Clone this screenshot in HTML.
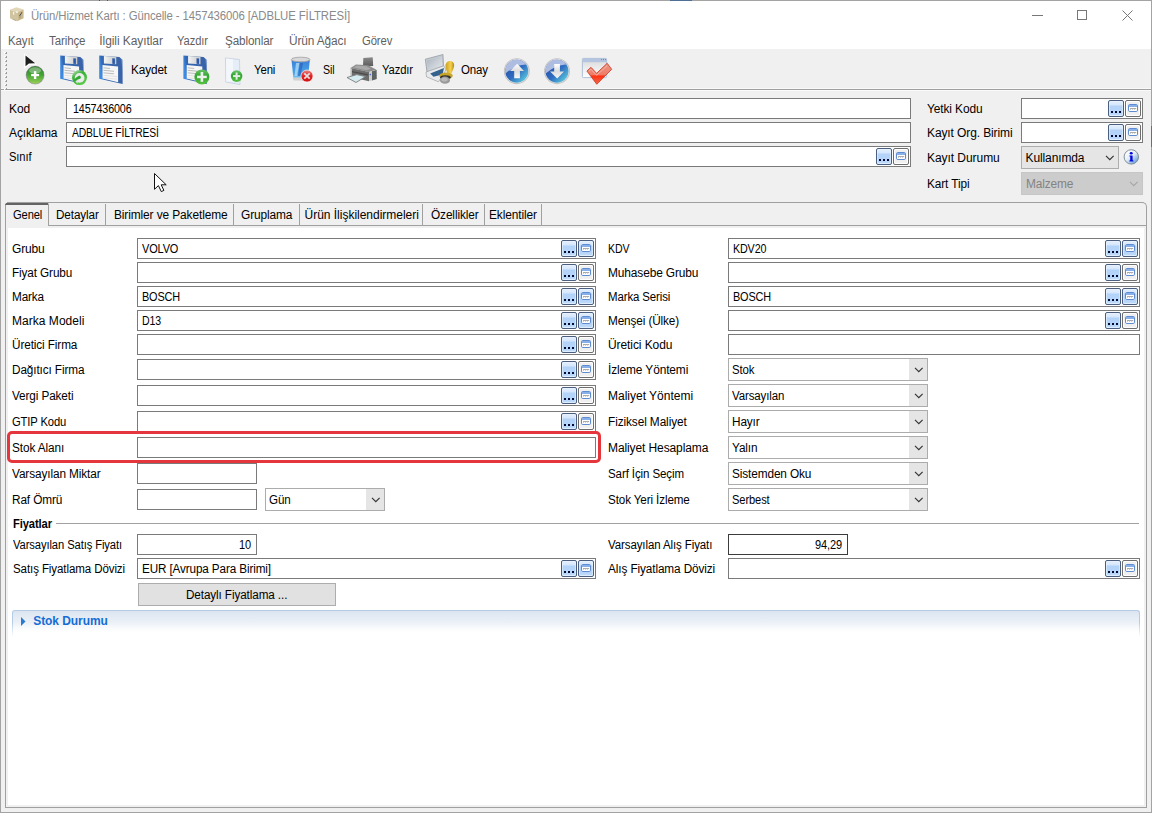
<!DOCTYPE html><html><head><meta charset="utf-8"><style>
*{margin:0;padding:0;box-sizing:border-box}
html,body{width:1152px;height:813px;overflow:hidden}
body{position:relative;background:#f0f0f0;font-family:"Liberation Sans",sans-serif;font-size:12px;color:#000}
.a{position:absolute}
.t{position:absolute;white-space:nowrap;line-height:20px;height:20px}
.f{position:absolute;background:#fff;border:1px solid #7a7a7a;height:21px}
.bd,.bc,.bw{position:absolute;width:16px;height:17px;border:1px solid #4b5e80;border-radius:2px;background:linear-gradient(#e3effd 0,#d6e7fc 4px,#b3d2f8 5px,#b7d6fa 13px,#d3e6fc 15px);box-shadow:inset 0 0 0 1px rgba(235,245,255,.55)}
.bw{border-color:#6e6e6e;background:#f0f0f0;box-shadow:inset 0 0 0 1px #fff}
.bd i{position:absolute;top:10px;width:2px;height:2px;background:#000a30}
.bc svg,.bw svg{position:absolute;left:2px;top:3px}
.cb{position:absolute;height:23px;border:1px solid #acacac;background:#fff}
.ca{position:absolute;right:0;top:0;width:18px;height:21px;background:#e5e5e5}
.chev{position:absolute;right:3px;top:8px}
</style></head><body>
<div class="a" style="left:0;top:0;width:1152px;height:813px;border:1px solid #a3a3a3"></div>
<div class="a" style="left:1px;top:1px;width:1150px;height:48px;background:#fff"></div>
<div class="a" style="left:1px;top:88px;width:1150px;height:1px;background:#f9f9f9"></div>
<div class="a" style="left:1px;top:89px;width:1150px;height:1px;background:#a0a0a0"></div>
<div class="a" style="left:1px;top:90px;width:1150px;height:1px;background:#fafafa"></div>
<div class="a" style="left:1151px;top:126px;width:1px;height:21px;background:#52739a"></div>
<div class="a" style="left:670px;top:0;width:22px;height:1px;background:#4f7096"></div><div class="a" style="left:99px;top:0;width:1px;height:1px;background:#555"></div><div class="a" style="left:107px;top:0;width:1px;height:1px;background:#555"></div>
<svg class="a" style="left:9px;top:6px" width="16" height="16" viewBox="9 6 16 16">
<path d="M10 9.8 L16.3 7.2 L23.6 9.4 L17.2 12.2 Z" fill="#e2d6b8"/>
<path d="M10 9.8 L17.2 12.2 L17.2 21.2 L10 18.2 Z" fill="#d0c3a0"/>
<path d="M17.2 12.2 L23.6 9.4 L23.6 18.3 L17.2 21.2 Z" fill="#c9b98a"/>
<path d="M13 11.6 L14.2 12 L14.2 15 L13 14.6 Z" fill="#f6f3ea"/>
<path d="M15.9 11.2 L17.8 11.8 L17.6 13 L15.9 12.6 Z" fill="#ffffff"/>
<path d="M21.8 12 L22.3 12.4 L20.2 15.8 L19 16 Z" fill="#363c50"/>
<path d="M19.6 15.8 L20.6 15.2 L20.3 18 L19.5 18.4 Z" fill="#8c8a80"/>
<path d="M12.5 18.8 L16 20.2 L15.8 21 L12.3 19.6 Z" fill="#8a7a55" opacity="0.5"/>
</svg>
<div class="t" style="top:6px;letter-spacing:-0.116px;transform:scaleX(0.9483);transform-origin:0 0;left:31px;color:#8a8a8a;">Ürün/Hizmet Kartı : Güncelle - 1457436006 [ADBLUE FİLTRESİ]</div>
<div class="a" style="left:1032px;top:15px;width:11px;height:1px;background:#777"></div>
<div class="a" style="left:1077px;top:10px;width:10px;height:10px;border:1px solid #777"></div>
<svg class="a" style="left:1122px;top:10px" width="11" height="11"><path d="M0.5 0.5L10.5 10.5M10.5 0.5L0.5 10.5" stroke="#777" stroke-width="1"/></svg>
<div class="t" style="top:31px;letter-spacing:-0.109px;transform:scaleX(0.9548);transform-origin:0 0;left:8.3px;color:#5f5f5f;">Kayıt</div>
<div class="t" style="top:31px;letter-spacing:-0.111px;transform:scaleX(0.9601);transform-origin:0 0;left:48.6px;color:#5f5f5f;">Tarihçe</div>
<div class="t" style="top:31px;letter-spacing:-0.079px;left:99.3px;color:#5f5f5f;">İlgili Kayıtlar</div>
<div class="t" style="top:31px;letter-spacing:-0.113px;transform:scaleX(0.9329);transform-origin:0 0;left:177.1px;color:#5f5f5f;">Yazdır</div>
<div class="t" style="top:31px;letter-spacing:-0.113px;transform:scaleX(0.9741);transform-origin:0 0;left:225.2px;color:#5f5f5f;">Şablonlar</div>
<div class="t" style="top:31px;letter-spacing:-0.119px;transform:scaleX(0.9882);transform-origin:0 0;left:288.5px;color:#5f5f5f;">Ürün Ağacı</div>
<div class="t" style="top:31px;letter-spacing:-0.131px;transform:scaleX(0.9428);transform-origin:0 0;left:361.8px;color:#5f5f5f;">Görev</div>
<svg class="a" style="left:0;top:0" width="640" height="90" viewBox="0 0 640 90">
<defs>
<linearGradient id="gg" x1="0" y1="0" x2="0" y2="1"><stop offset="0" stop-color="#2f7f2a"/><stop offset="0.5" stop-color="#45a535"/><stop offset="1" stop-color="#9ad25a"/></linearGradient>
<linearGradient id="gg2" x1="0" y1="0" x2="0" y2="1"><stop offset="0" stop-color="#6cc46a"/><stop offset="0.45" stop-color="#2fa52f"/><stop offset="1" stop-color="#59c240"/></linearGradient>
<linearGradient id="gg3" x1="0.2" y1="0" x2="0.8" y2="1"><stop offset="0" stop-color="#a8dca4"/><stop offset="0.35" stop-color="#38b038"/><stop offset="1" stop-color="#5ed24a"/></linearGradient>
<linearGradient id="ar" x1="0" y1="0" x2="0" y2="1"><stop offset="0" stop-color="#ffffff"/><stop offset="0.5" stop-color="#dcdcdc"/><stop offset="1" stop-color="#f8f8f8"/></linearGradient>
<linearGradient id="wn" x1="0" y1="0" x2="0" y2="1"><stop offset="0" stop-color="#d8d8d8"/><stop offset="1" stop-color="#ffffff"/></linearGradient>
<linearGradient id="lid" x1="0" y1="0" x2="1" y2="1"><stop offset="0" stop-color="#a9b1ba"/><stop offset="0.5" stop-color="#c9cfd6"/><stop offset="1" stop-color="#e6e9ec"/></linearGradient>
<linearGradient id="fb" x1="0" y1="0.2" x2="1" y2="0"><stop offset="0" stop-color="#3c8ae2"/><stop offset="0.12" stop-color="#3468b4"/><stop offset="0.88" stop-color="#3a62a8"/><stop offset="1" stop-color="#8fb0dc"/></linearGradient>
<linearGradient id="sh" x1="0" y1="0" x2="1" y2="0"><stop offset="0" stop-color="#f4f4f4"/><stop offset="1" stop-color="#c8c8c8"/></linearGradient>
<linearGradient id="bc" x1="0.1" y1="0.2" x2="0.85" y2="0.95"><stop offset="0" stop-color="#2850a8"/><stop offset="0.5" stop-color="#2f6cc0"/><stop offset="1" stop-color="#5ccade"/></linearGradient>
<linearGradient id="tb" x1="0" y1="0" x2="0" y2="1"><stop offset="0" stop-color="#3a7fd8"/><stop offset="0.7" stop-color="#4aa6e8"/><stop offset="1" stop-color="#8fd6f5"/></linearGradient>
<linearGradient id="rc" x1="0" y1="0" x2="0" y2="1"><stop offset="0" stop-color="#e88a8a"/><stop offset="0.5" stop-color="#e52020"/><stop offset="1" stop-color="#d01010"/></linearGradient>
<linearGradient id="ck" x1="0" y1="0" x2="0" y2="1"><stop offset="0" stop-color="#e9988a"/><stop offset="0.55" stop-color="#f07a66"/><stop offset="0.6" stop-color="#ff3010"/><stop offset="1" stop-color="#f06a50"/></linearGradient>
<linearGradient id="gold" x1="0" y1="0" x2="1" y2="0"><stop offset="0" stop-color="#c9a020"/><stop offset="0.6" stop-color="#f5d050"/><stop offset="1" stop-color="#b08a10"/></linearGradient>
<linearGradient id="pr" x1="0" y1="0" x2="0" y2="1"><stop offset="0" stop-color="#8a8a8a"/><stop offset="1" stop-color="#5a5a5a"/></linearGradient>
</defs>
<rect x="4" y="52" width="2" height="2" fill="#fbfbfb"/><rect x="6" y="52" width="1" height="2" fill="#9a9a9a"/><rect x="5" y="53" width="1" height="1" fill="#b0b0b0"/>
<rect x="4" y="56" width="2" height="2" fill="#fbfbfb"/><rect x="6" y="56" width="1" height="2" fill="#9a9a9a"/><rect x="5" y="57" width="1" height="1" fill="#b0b0b0"/>
<rect x="4" y="60" width="2" height="2" fill="#fbfbfb"/><rect x="6" y="60" width="1" height="2" fill="#9a9a9a"/><rect x="5" y="61" width="1" height="1" fill="#b0b0b0"/>
<rect x="4" y="64" width="2" height="2" fill="#fbfbfb"/><rect x="6" y="64" width="1" height="2" fill="#9a9a9a"/><rect x="5" y="65" width="1" height="1" fill="#b0b0b0"/>
<rect x="4" y="68" width="2" height="2" fill="#fbfbfb"/><rect x="6" y="68" width="1" height="2" fill="#9a9a9a"/><rect x="5" y="69" width="1" height="1" fill="#b0b0b0"/>
<rect x="4" y="72" width="2" height="2" fill="#fbfbfb"/><rect x="6" y="72" width="1" height="2" fill="#9a9a9a"/><rect x="5" y="73" width="1" height="1" fill="#b0b0b0"/>
<rect x="4" y="76" width="2" height="2" fill="#fbfbfb"/><rect x="6" y="76" width="1" height="2" fill="#9a9a9a"/><rect x="5" y="77" width="1" height="1" fill="#b0b0b0"/>
<rect x="4" y="80" width="2" height="2" fill="#fbfbfb"/><rect x="6" y="80" width="1" height="2" fill="#9a9a9a"/><rect x="5" y="81" width="1" height="1" fill="#b0b0b0"/>
<rect x="4" y="84" width="2" height="2" fill="#fbfbfb"/><rect x="6" y="84" width="1" height="2" fill="#9a9a9a"/><rect x="5" y="85" width="1" height="1" fill="#b0b0b0"/>
<rect x="4" y="88" width="2" height="2" fill="#fbfbfb"/><rect x="6" y="88" width="1" height="2" fill="#9a9a9a"/><rect x="5" y="89" width="1" height="1" fill="#b0b0b0"/>
<path d="M24.2 53.3 L24.2 68.6 L28.6 65.2 L37 64.6 Z" fill="#fff"/>
<path d="M25.5 55.5 L25.5 66.2 L28.9 63.4 L35.2 63.3 Z" fill="#1e1e1e"/>
<circle cx="35.1" cy="75.1" r="9" fill="url(#gg)" stroke="#7a5a8a" stroke-width="0.4"/>
<ellipse cx="35.1" cy="70.5" rx="6" ry="3.2" fill="#fff" opacity="0.35"/>
<rect x="31.1" y="74" width="8" height="2.2" fill="#fff"/><rect x="33.9" y="71.2" width="2.4" height="7.8" fill="#fff"/>
<path d="M60.2 55.6 L80.3 57.0 L83.6 59.8 L83.6 84.1 L60.2 78.7 Z" fill="url(#fb)"/>
<path d="M64.9 55.9 L77.3 56.8 L77.3 64.2 L64.9 63.6 Z" fill="url(#sh)"/>
<path d="M73.3 58.2 L75.9 58.4 L75.9 63.9 L73.3 63.8 Z" fill="#2c5aa8"/>
<path d="M63.5 65.0 L79.1 66.6 L79.1 82.2 L63.5 78.5 Z" fill="#f6f6f6"/>
<path d="M64.5 67.8 L71.0 68.5" stroke="#a0a0a0" stroke-width="0.7"/>
<path d="M64.5 70.3 L75.0 71.3" stroke="#a0a0a0" stroke-width="0.7"/>
<path d="M64.5 72.8 L75.0 73.8" stroke="#a0a0a0" stroke-width="0.7"/>
<path d="M64.5 75.3 L78.5 76.7" stroke="#d8d8d8" stroke-width="0.7"/>
<path d="M64.5 77.8 L78.5 79.2" stroke="#d8d8d8" stroke-width="0.7"/>
<circle cx="79.5" cy="77.6" r="7.5" fill="url(#gg3)"/>
<circle cx="79.6" cy="77.9" r="4.9" fill="#ecebee"/>
<path d="M73.3 80.2 L76.5 77.2 L79.2 75.6 L81 76.8 L80.5 78.4 L77.4 79.8 L75.8 82.5 Z" fill="#30a830"/>
<path d="M75.2 81 L79 79.7 L77.2 83.6 Z" fill="#e4e2e6"/>
<path d="M99.2 55.6 L119.3 57.0 L122.6 59.8 L122.6 84.1 L99.2 78.7 Z" fill="url(#fb)"/>
<path d="M103.9 55.9 L116.3 56.8 L116.3 64.2 L103.9 63.6 Z" fill="url(#sh)"/>
<path d="M112.3 58.2 L114.9 58.4 L114.9 63.9 L112.3 63.8 Z" fill="#2c5aa8"/>
<path d="M102.5 65.0 L118.1 66.6 L118.1 82.2 L102.5 78.5 Z" fill="#f6f6f6"/>
<path d="M103.5 67.8 L110.0 68.5" stroke="#a0a0a0" stroke-width="0.7"/>
<path d="M103.5 70.3 L114.0 71.3" stroke="#a0a0a0" stroke-width="0.7"/>
<path d="M103.5 72.8 L114.0 73.8" stroke="#a0a0a0" stroke-width="0.7"/>
<path d="M103.5 75.3 L117.5 76.7" stroke="#d8d8d8" stroke-width="0.7"/>
<path d="M103.5 77.8 L117.5 79.2" stroke="#d8d8d8" stroke-width="0.7"/>
<path d="M183.4 55.6 L203.5 57.0 L206.8 59.8 L206.8 84.1 L183.4 78.7 Z" fill="url(#fb)"/>
<path d="M188.1 55.9 L200.5 56.8 L200.5 64.2 L188.1 63.6 Z" fill="url(#sh)"/>
<path d="M196.5 58.2 L199.1 58.4 L199.1 63.9 L196.5 63.8 Z" fill="#2c5aa8"/>
<path d="M186.7 65.0 L202.3 66.6 L202.3 82.2 L186.7 78.5 Z" fill="#f6f6f6"/>
<path d="M187.7 67.8 L194.2 68.5" stroke="#a0a0a0" stroke-width="0.7"/>
<path d="M187.7 70.3 L198.2 71.3" stroke="#a0a0a0" stroke-width="0.7"/>
<path d="M187.7 72.8 L198.2 73.8" stroke="#a0a0a0" stroke-width="0.7"/>
<path d="M187.7 75.3 L201.7 76.7" stroke="#d8d8d8" stroke-width="0.7"/>
<path d="M187.7 77.8 L201.7 79.2" stroke="#d8d8d8" stroke-width="0.7"/>
<circle cx="201.9" cy="76.9" r="7.5" fill="url(#gg2)"/>
<rect x="197" y="75.7" width="9.8" height="2.5" fill="#eef2ee"/><rect x="200.6" y="72" width="2.6" height="9.8" fill="#eef2ee"/>
<path d="M225.4 57.9 L239.5 59.5 L240 84.6 L225.8 82 Z" fill="#e4edf8" stroke="#b8c6d6" stroke-width="0.6"/>
<path d="M226 58.5 L233 59.3 L233 81.8 L226.3 81.5 Z" fill="#f3f7fc"/>
<circle cx="236.6" cy="76.1" r="5.8" fill="url(#gg2)"/>
<rect x="233" y="75.1" width="7.2" height="2" fill="#e6ece6"/><rect x="235.6" y="72.5" width="2" height="7.2" fill="#e6ece6"/>
<path d="M291.5 60 L309.8 60 L307.8 79.8 L293.5 79.8 Z" fill="url(#tb)"/>
<path d="M296 63 L299.5 63 L297 76 L294.5 76 Z" fill="#bfe4fa" opacity="0.7"/><path d="M300 63 L303 63 L300.5 76 L298 76 Z" fill="#2858b8" opacity="0.6"/>
<ellipse cx="300.6" cy="59.5" rx="9.3" ry="2.3" fill="#d8d8d8" stroke="#a0a0a0" stroke-width="0.8"/>
<path d="M293.3 77.5 L307.9 77.5 L307.6 80.5 L293.6 80.5 Z" fill="#d0d0d0"/>
<circle cx="307" cy="76" r="6" fill="url(#rc)" stroke="#fff" stroke-width="0.6"/>
<path d="M304.3 73.3 L309.7 78.7 M309.7 73.3 L304.3 78.7" stroke="#e0e0e0" stroke-width="1.8"/>
<path d="M363.3 58 L372.7 57.2 L373.2 66 L363 66.5 Z" fill="url(#pr)"/>
<path d="M350.5 68 L356 64.6 L368 65.3 L376.5 69.8 L369 72 Z" fill="#8c8c8c"/>
<path d="M353 67.2 L357 65.6 L366.5 66.2 L371 69 L366 70.2 Z" fill="#a9a9a9"/>
<path d="M350.5 68 L369 72 L369 81.3 L350.5 77 Z" fill="#6c6c6c"/>
<path d="M352 71 L368 74.3 L368 75.5 L352 72.3 Z" fill="#4a4a4a"/>
<path d="M369 72 L376.5 69.8 L376.7 79 L369 81.3 Z" fill="#c9cdcd"/>
<path d="M372 71.2 L376.6 69.9 L376.7 79 L372 80.4 Z" fill="#5e6262"/>
<path d="M350 68.2 L351.8 68.6 L351.8 77.3 L350 77 Z" fill="#d4d4d4"/>
<circle cx="370.3" cy="74.6" r="0.8" fill="#4a64d0"/>
<path d="M347 77.5 L356.8 74.6 L365.5 76.6 L356 82.5 Z" fill="#d2eaf0" stroke="#7c7c7c" stroke-width="0.9"/>
<path d="M425.3 59.2 L443 54.5 L443.5 66.5 L427 72.5 Z" fill="#c3c9d0" stroke="#8f959c" stroke-width="0.7"/>
<path d="M427 60.5 L442 56.5 L442.2 65.8 L428 71 Z" fill="url(#lid)"/>
<path d="M426 72 L443.8 65.8 L446 70 L438.5 81.8 L426.5 76.8 Z" fill="#e8eaec" stroke="#9ca0a4" stroke-width="0.7"/>
<path d="M430.2 73.6 L444 68 L442.5 74.5 L433.5 76.8 Z" fill="#34628e"/>
<path d="M447 62 C449 60,454 60.5,454.2 65 C454.2 68,452.2 71,451.2 73.8 L447.6 73.8 C446.6 71,445 67,445.5 64.5 Z" fill="url(#gold)"/>
<ellipse cx="446" cy="75.8" rx="6.8" ry="3.3" fill="#c9a52a"/>
<ellipse cx="445.4" cy="77.3" rx="5.3" ry="2" fill="#333"/>
<ellipse cx="445" cy="80.2" rx="5" ry="3.6" fill="#9a9a9a"/>
<ellipse cx="444.5" cy="79.5" rx="3.2" ry="2" fill="#b8b8b8"/>
<circle cx="516.8" cy="71.2" r="12.4" fill="#f4f4f4" stroke="#c4c4c4" stroke-width="1.1"/>
<circle cx="516.8" cy="71.2" r="11.5" fill="url(#bc)"/>
<path d="M505.49999999999994 73.5 A11.5 11.5 0 0 1 526.0999999999999 64.4 C519.8 64.7,512.8 67.2,505.49999999999994 73.5 Z" fill="#bcc8e8" opacity="0.9"/>
<path d="M517.1999999999999 63.8 L524.0 71 L519.9 71 L519.9 78.3 L514.1999999999999 78.3 L514.1999999999999 71 L509.99999999999994 71 Z" fill="url(#ar)"/>
<circle cx="557" cy="71.2" r="12.4" fill="#f4f4f4" stroke="#c4c4c4" stroke-width="1.1"/>
<circle cx="557" cy="71.2" r="11.5" fill="url(#bc)"/>
<path d="M545.7 73.5 A11.5 11.5 0 0 1 566.3 64.4 C560 64.7,553 67.2,545.7 73.5 Z" fill="#bcc8e8" opacity="0.9"/>
<path d="M557.2 78.6 L564 71.4 L559.9 71.4 L559.9 64.1 L554.2 64.1 L554.2 71.4 L550 71.4 Z" fill="url(#ar)"/>
<rect x="582.4" y="58.4" width="24.2" height="19.2" rx="1" fill="url(#wn)" stroke="#a9bad6" stroke-width="0.9"/>
<rect x="582.8" y="58.8" width="23.4" height="3.4" fill="#b3c5e1"/>
<path d="M601 59.6 h1 M603 59.6 h1 M605 59.6 h1" stroke="#6b84b8" stroke-width="1"/>
<path d="M586.9 71 L591 67.3 L596.6 73.3 L607.2 63.3 L611.7 69.3 L596.8 84.3 Z" fill="url(#ck)" stroke="#c8361f" stroke-width="0.8" stroke-linejoin="round"/>
<path d="M588.8 71.2 L591 69.3 L596.6 75.3 L607 65.8" fill="none" stroke="#f6c4b8" stroke-width="0.9" opacity="0.8"/>
</svg>
<div class="t" style="top:60px;letter-spacing:-0.125px;transform:scaleX(0.9833);transform-origin:0 0;left:131.2px;">Kaydet</div>
<div class="t" style="top:60px;letter-spacing:-0.115px;transform:scaleX(0.9482);transform-origin:0 0;left:254.4px;">Yeni</div>
<div class="t" style="top:60px;letter-spacing:-0.089px;transform:scaleX(0.8871);transform-origin:0 0;left:323.1px;">Sil</div>
<div class="t" style="top:60px;letter-spacing:-0.113px;transform:scaleX(0.9360);transform-origin:0 0;left:382px;">Yazdır</div>
<div class="t" style="top:60px;letter-spacing:-0.143px;transform:scaleX(0.9568);transform-origin:0 0;left:460.8px;">Onay</div>
<div class="t" style="top:99px;letter-spacing:-0.120px;left:9px;">Kod</div>
<div class="t" style="top:123px;letter-spacing:-0.120px;left:9px;">Açıklama</div>
<div class="t" style="top:147px;letter-spacing:-0.099px;transform:scaleX(0.9300);transform-origin:0 0;left:9px;">Sınıf</div>
<div class="f" style="left:66px;top:98px;width:845px;"></div>
<div class="f" style="left:66px;top:122px;width:845px;"></div>
<div class="t" style="top:99px;letter-spacing:-0.134px;transform:scaleX(0.8958);transform-origin:0 0;left:72.7px;">1457436006</div>
<div class="t" style="top:123px;letter-spacing:-0.138px;transform:scaleX(0.8587);transform-origin:0 0;left:72.2px;">ADBLUE FİLTRESİ</div>
<div class="f" style="left:66px;top:146px;width:845px;"></div>
<div class="bd" style="left:876px;top:148px"><i style="left:2px"></i><i style="left:6px"></i><i style="left:10px"></i></div>
<div class="bw" style="left:893px;top:148px"><svg width="10" height="8" viewBox="0 0 10 8"><rect x="0.5" y="0.5" width="9" height="7" rx="1.3" fill="#fff" stroke="#5f8bd0"/><rect x="1" y="1" width="8" height="2" fill="#88afe8"/><path d="M2 4.5 H8.2" stroke="#a9a9a9" stroke-width="1"/><path d="M2.5 4.5 V5.8 M4.6 4.5 V5.8 M6.7 4.5 V5.8" stroke="#b4b4b4" stroke-width="0.9"/></svg></div>
<div class="t" style="top:99px;letter-spacing:-0.114px;transform:scaleX(0.9946);transform-origin:0 0;left:927px;">Yetki Kodu</div>
<div class="t" style="top:123px;letter-spacing:-0.109px;left:927px;">Kayıt Org. Birimi</div>
<div class="t" style="top:148px;letter-spacing:-0.055px;left:927px;">Kayıt Durumu</div>
<div class="t" style="top:174px;letter-spacing:-0.098px;transform:scaleX(0.9853);transform-origin:0 0;left:927px;">Kart Tipi</div>
<div class="f" style="left:1021px;top:98px;width:122px;"></div>
<div class="bd" style="left:1108px;top:100px"><i style="left:2px"></i><i style="left:6px"></i><i style="left:10px"></i></div>
<div class="bw" style="left:1125px;top:100px"><svg width="10" height="8" viewBox="0 0 10 8"><rect x="0.5" y="0.5" width="9" height="7" rx="1.3" fill="#fff" stroke="#5f8bd0"/><rect x="1" y="1" width="8" height="2" fill="#88afe8"/><path d="M2 4.5 H8.2" stroke="#a9a9a9" stroke-width="1"/><path d="M2.5 4.5 V5.8 M4.6 4.5 V5.8 M6.7 4.5 V5.8" stroke="#b4b4b4" stroke-width="0.9"/></svg></div>
<div class="f" style="left:1021px;top:122px;width:122px;"></div>
<div class="bd" style="left:1108px;top:124px"><i style="left:2px"></i><i style="left:6px"></i><i style="left:10px"></i></div>
<div class="bw" style="left:1125px;top:124px"><svg width="10" height="8" viewBox="0 0 10 8"><rect x="0.5" y="0.5" width="9" height="7" rx="1.3" fill="#fff" stroke="#5f8bd0"/><rect x="1" y="1" width="8" height="2" fill="#88afe8"/><path d="M2 4.5 H8.2" stroke="#a9a9a9" stroke-width="1"/><path d="M2.5 4.5 V5.8 M4.6 4.5 V5.8 M6.7 4.5 V5.8" stroke="#b4b4b4" stroke-width="0.9"/></svg></div>
<div class="cb" style="left:1021px;top:146px;width:98px;height:23px;background:#e5e5e5;border-color:#adadad"><svg class="chev" width="10" height="6" viewBox="0 0 10 6"><path d="M1 0.8 L4.8 4.6 L8.6 0.8" fill="none" stroke="#333" stroke-width="1.15"/></svg></div>
<div class="t" style="top:148px;letter-spacing:-0.125px;left:1025.6px;">Kullanımda</div>
<svg class="a" style="left:1123px;top:149px" width="17" height="17" viewBox="0 0 17 17">
<defs><linearGradient id="ig" x1="0.15" y1="0.1" x2="0.85" y2="0.95"><stop offset="0" stop-color="#ffffff"/><stop offset="0.45" stop-color="#e4eef8"/><stop offset="1" stop-color="#5f9ad6"/></linearGradient></defs>
<circle cx="8.3" cy="7.9" r="7.2" fill="url(#ig)" stroke="#76838f" stroke-width="0.9"/>
<ellipse cx="8.2" cy="4.3" rx="1.5" ry="1.2" fill="#0008e0"/>
<path d="M6.4 6.6 L9.6 6.6 L9.6 11.2 L10.4 11.6 L10.4 12.5 L6.4 12.5 L6.4 11.6 L7.2 11.2 L7.2 7.5 L6.4 7.5 Z" fill="#0008e0"/>
</svg>
<div class="cb" style="left:1021px;top:172px;width:122px;height:23px;background:#cccccc;border-color:#c6c6c6"><svg class="chev" width="10" height="6" viewBox="0 0 10 6"><path d="M1 0.8 L4.8 4.6 L8.6 0.8" fill="none" stroke="#a6a6a6" stroke-width="1.15"/></svg></div>
<div class="t" style="top:174px;letter-spacing:-0.139px;transform:scaleX(0.9913);transform-origin:0 0;left:1025.6px;color:#838383;">Malzeme</div>
<svg class="a" style="left:150px;top:170px" width="20" height="25" viewBox="150 170 20 25"><path d="M154.5 173.5 L154.5 189.3 L158.4 185.6 L161.3 191.6 L163.9 190.4 L161.2 184.8 L166.2 184.8 Z" fill="#fff" stroke="#111" stroke-width="1" stroke-linejoin="round"/></svg>
<div class="a" style="left:7px;top:202px;width:1136px;height:1px;background:#a0a0a0"></div>
<div class="a" style="left:1138px;top:202px;width:9px;height:9px;border-top:1px solid #a0a0a0;border-right:1px solid #a0a0a0;border-radius:0 5px 0 0"></div>
<div class="a" style="left:1146px;top:211px;width:1px;height:597px;background:#a0a0a0"></div>
<div class="a" style="left:48px;top:225px;width:1098px;height:1px;background:#a0a0a0"></div>
<div class="a" style="left:5px;top:204px;width:1px;height:604px;background:#a0a0a0"></div>
<div class="a" style="left:5px;top:807px;width:1142px;height:1px;background:#a0a0a0"></div>
<div class="a" style="left:5px;top:203px;width:44px;height:2px;background:#646464;clip-path:polygon(1px 0,43px 0,44px 2px,0 2px)"></div>
<div class="a" style="left:48px;top:204px;width:1px;height:22px;background:#a0a0a0"></div>
<div class="a" style="left:8px;top:228px;width:1136px;height:577px;background:#fff"></div>
<div class="a" style="left:105px;top:204px;width:1px;height:21px;background:#a0a0a0"></div>
<div class="t" style="top:205px;letter-spacing:-0.111px;transform:scaleX(0.9924);transform-origin:0 0;left:113.6px;">Birimler ve Paketleme</div>
<div class="a" style="left:233px;top:204px;width:1px;height:21px;background:#a0a0a0"></div>
<div class="t" style="top:205px;letter-spacing:-0.132px;transform:scaleX(0.9935);transform-origin:0 0;left:241.3px;">Gruplama</div>
<div class="a" style="left:299px;top:204px;width:1px;height:21px;background:#a0a0a0"></div>
<div class="t" style="top:205px;letter-spacing:-0.013px;left:304.5px;">Ürün İlişkilendirmeleri</div>
<div class="a" style="left:422px;top:204px;width:1px;height:21px;background:#a0a0a0"></div>
<div class="t" style="top:205px;letter-spacing:-0.099px;transform:scaleX(0.9843);transform-origin:0 0;left:430.6px;">Özellikler</div>
<div class="a" style="left:484px;top:204px;width:1px;height:21px;background:#a0a0a0"></div>
<div class="t" style="top:205px;letter-spacing:-0.099px;transform:scaleX(0.9923);transform-origin:0 0;left:489.2px;">Eklentiler</div>
<div class="a" style="left:541px;top:204px;width:1px;height:21px;background:#a0a0a0"></div>
<div class="t" style="top:205px;letter-spacing:-0.128px;transform:scaleX(0.9302);transform-origin:0 0;left:12.5px;">Genel</div>
<div class="t" style="top:205px;letter-spacing:-0.112px;transform:scaleX(0.9750);transform-origin:0 0;left:56.25px;">Detaylar</div>
<div class="t" style="top:239px;letter-spacing:-0.152px;left:12px;">Grubu</div>
<div class="f" style="left:137px;top:238px;width:459px;"></div>
<div class="t" style="top:239px;letter-spacing:-0.162px;transform:scaleX(0.9128);transform-origin:0 0;left:142px;">VOLVO</div>
<div class="bd" style="left:561px;top:240px"><i style="left:2px"></i><i style="left:6px"></i><i style="left:10px"></i></div>
<div class="bc" style="left:578px;top:240px"><svg width="10" height="8" viewBox="0 0 10 8"><rect x="0.5" y="0.5" width="9" height="7" rx="1.3" fill="#fff" stroke="#5f8bd0"/><rect x="1" y="1" width="8" height="2" fill="#88afe8"/><path d="M2 4.5 H8.2" stroke="#a9a9a9" stroke-width="1"/><path d="M2.5 4.5 V5.8 M4.6 4.5 V5.8 M6.7 4.5 V5.8" stroke="#b4b4b4" stroke-width="0.9"/></svg></div>
<div class="t" style="top:263px;letter-spacing:-0.114px;transform:scaleX(0.9796);transform-origin:0 0;left:12px;">Fiyat Grubu</div>
<div class="f" style="left:137px;top:262px;width:459px;"></div>
<div class="bd" style="left:561px;top:264px"><i style="left:2px"></i><i style="left:6px"></i><i style="left:10px"></i></div>
<div class="bw" style="left:578px;top:264px"><svg width="10" height="8" viewBox="0 0 10 8"><rect x="0.5" y="0.5" width="9" height="7" rx="1.3" fill="#fff" stroke="#5f8bd0"/><rect x="1" y="1" width="8" height="2" fill="#88afe8"/><path d="M2 4.5 H8.2" stroke="#a9a9a9" stroke-width="1"/><path d="M2.5 4.5 V5.8 M4.6 4.5 V5.8 M6.7 4.5 V5.8" stroke="#b4b4b4" stroke-width="0.9"/></svg></div>
<div class="t" style="top:287px;letter-spacing:-0.133px;transform:scaleX(0.9796);transform-origin:0 0;left:12px;">Marka</div>
<div class="f" style="left:137px;top:286px;width:459px;"></div>
<div class="t" style="top:287px;letter-spacing:-0.171px;transform:scaleX(0.9084);transform-origin:0 0;left:142px;">BOSCH</div>
<div class="bd" style="left:561px;top:288px"><i style="left:2px"></i><i style="left:6px"></i><i style="left:10px"></i></div>
<div class="bc" style="left:578px;top:288px"><svg width="10" height="8" viewBox="0 0 10 8"><rect x="0.5" y="0.5" width="9" height="7" rx="1.3" fill="#fff" stroke="#5f8bd0"/><rect x="1" y="1" width="8" height="2" fill="#88afe8"/><path d="M2 4.5 H8.2" stroke="#a9a9a9" stroke-width="1"/><path d="M2.5 4.5 V5.8 M4.6 4.5 V5.8 M6.7 4.5 V5.8" stroke="#b4b4b4" stroke-width="0.9"/></svg></div>
<div class="t" style="top:311px;letter-spacing:0.031px;left:12px;">Marka Modeli</div>
<div class="f" style="left:137px;top:310px;width:459px;"></div>
<div class="t" style="top:311px;letter-spacing:-0.147px;transform:scaleX(0.8806);transform-origin:0 0;left:142px;">D13</div>
<div class="bd" style="left:561px;top:312px"><i style="left:2px"></i><i style="left:6px"></i><i style="left:10px"></i></div>
<div class="bc" style="left:578px;top:312px"><svg width="10" height="8" viewBox="0 0 10 8"><rect x="0.5" y="0.5" width="9" height="7" rx="1.3" fill="#fff" stroke="#5f8bd0"/><rect x="1" y="1" width="8" height="2" fill="#88afe8"/><path d="M2 4.5 H8.2" stroke="#a9a9a9" stroke-width="1"/><path d="M2.5 4.5 V5.8 M4.6 4.5 V5.8 M6.7 4.5 V5.8" stroke="#b4b4b4" stroke-width="0.9"/></svg></div>
<div class="t" style="top:335px;letter-spacing:-0.105px;transform:scaleX(0.9796);transform-origin:0 0;left:12px;">Üretici Firma</div>
<div class="f" style="left:137px;top:334px;width:459px;"></div>
<div class="bd" style="left:561px;top:336px"><i style="left:2px"></i><i style="left:6px"></i><i style="left:10px"></i></div>
<div class="bw" style="left:578px;top:336px"><svg width="10" height="8" viewBox="0 0 10 8"><rect x="0.5" y="0.5" width="9" height="7" rx="1.3" fill="#fff" stroke="#5f8bd0"/><rect x="1" y="1" width="8" height="2" fill="#88afe8"/><path d="M2 4.5 H8.2" stroke="#a9a9a9" stroke-width="1"/><path d="M2.5 4.5 V5.8 M4.6 4.5 V5.8 M6.7 4.5 V5.8" stroke="#b4b4b4" stroke-width="0.9"/></svg></div>
<div class="t" style="top:360px;letter-spacing:-0.108px;transform:scaleX(0.9796);transform-origin:0 0;left:12px;">Dağıtıcı Firma</div>
<div class="f" style="left:137px;top:359px;width:459px;"></div>
<div class="bd" style="left:561px;top:361px"><i style="left:2px"></i><i style="left:6px"></i><i style="left:10px"></i></div>
<div class="bw" style="left:578px;top:361px"><svg width="10" height="8" viewBox="0 0 10 8"><rect x="0.5" y="0.5" width="9" height="7" rx="1.3" fill="#fff" stroke="#5f8bd0"/><rect x="1" y="1" width="8" height="2" fill="#88afe8"/><path d="M2 4.5 H8.2" stroke="#a9a9a9" stroke-width="1"/><path d="M2.5 4.5 V5.8 M4.6 4.5 V5.8 M6.7 4.5 V5.8" stroke="#b4b4b4" stroke-width="0.9"/></svg></div>
<div class="t" style="top:386px;letter-spacing:-0.107px;transform:scaleX(0.9796);transform-origin:0 0;left:12px;">Vergi Paketi</div>
<div class="f" style="left:137px;top:385px;width:459px;"></div>
<div class="bd" style="left:561px;top:387px"><i style="left:2px"></i><i style="left:6px"></i><i style="left:10px"></i></div>
<div class="bw" style="left:578px;top:387px"><svg width="10" height="8" viewBox="0 0 10 8"><rect x="0.5" y="0.5" width="9" height="7" rx="1.3" fill="#fff" stroke="#5f8bd0"/><rect x="1" y="1" width="8" height="2" fill="#88afe8"/><path d="M2 4.5 H8.2" stroke="#a9a9a9" stroke-width="1"/><path d="M2.5 4.5 V5.8 M4.6 4.5 V5.8 M6.7 4.5 V5.8" stroke="#b4b4b4" stroke-width="0.9"/></svg></div>
<div class="t" style="top:412px;letter-spacing:-0.131px;transform:scaleX(0.9349);transform-origin:0 0;left:12px;">GTIP Kodu</div>
<div class="f" style="left:137px;top:411px;width:459px;"></div>
<div class="bd" style="left:561px;top:413px"><i style="left:2px"></i><i style="left:6px"></i><i style="left:10px"></i></div>
<div class="bw" style="left:578px;top:413px"><svg width="10" height="8" viewBox="0 0 10 8"><rect x="0.5" y="0.5" width="9" height="7" rx="1.3" fill="#fff" stroke="#5f8bd0"/><rect x="1" y="1" width="8" height="2" fill="#88afe8"/><path d="M2 4.5 H8.2" stroke="#a9a9a9" stroke-width="1"/><path d="M2.5 4.5 V5.8 M4.6 4.5 V5.8 M6.7 4.5 V5.8" stroke="#b4b4b4" stroke-width="0.9"/></svg></div>
<div class="t" style="top:438px;letter-spacing:-0.108px;transform:scaleX(0.9837);transform-origin:0 0;left:12px;">Stok Alanı</div>
<div class="f" style="left:137px;top:437px;width:459px;"></div>
<div class="t" style="top:464px;letter-spacing:-0.108px;transform:scaleX(0.9847);transform-origin:0 0;left:12px;">Varsayılan Miktar</div>
<div class="f" style="left:137px;top:463px;width:120px;"></div>
<div class="t" style="top:490px;letter-spacing:-0.130px;transform:scaleX(0.9848);transform-origin:0 0;left:12px;">Raf Ömrü</div>
<div class="f" style="left:137px;top:489px;width:120px;"></div>
<div class="cb" style="left:265px;top:488px;width:120px"><div class="ca"></div><svg class="chev" width="10" height="6" viewBox="0 0 10 6"><path d="M1 0.8 L4.8 4.6 L8.6 0.8" fill="none" stroke="#333" stroke-width="1.15"/></svg></div>
<div class="t" style="top:490px;letter-spacing:-0.151px;transform:scaleX(0.9670);transform-origin:0 0;left:269px;">Gün</div>
<div class="t" style="top:239px;letter-spacing:-0.165px;transform:scaleX(0.8804);transform-origin:0 0;left:608px;">KDV</div>
<div class="f" style="left:728px;top:238px;width:412px;"></div>
<div class="t" style="top:239px;letter-spacing:-0.152px;transform:scaleX(0.8935);transform-origin:0 0;left:733px;">KDV20</div>
<div class="bd" style="left:1105px;top:240px"><i style="left:2px"></i><i style="left:6px"></i><i style="left:10px"></i></div>
<div class="bc" style="left:1122px;top:240px"><svg width="10" height="8" viewBox="0 0 10 8"><rect x="0.5" y="0.5" width="9" height="7" rx="1.3" fill="#fff" stroke="#5f8bd0"/><rect x="1" y="1" width="8" height="2" fill="#88afe8"/><path d="M2 4.5 H8.2" stroke="#a9a9a9" stroke-width="1"/><path d="M2.5 4.5 V5.8 M4.6 4.5 V5.8 M6.7 4.5 V5.8" stroke="#b4b4b4" stroke-width="0.9"/></svg></div>
<div class="t" style="top:263px;letter-spacing:-0.132px;transform:scaleX(0.9936);transform-origin:0 0;left:608px;">Muhasebe Grubu</div>
<div class="f" style="left:728px;top:262px;width:412px;"></div>
<div class="bd" style="left:1105px;top:264px"><i style="left:2px"></i><i style="left:6px"></i><i style="left:10px"></i></div>
<div class="bw" style="left:1122px;top:264px"><svg width="10" height="8" viewBox="0 0 10 8"><rect x="0.5" y="0.5" width="9" height="7" rx="1.3" fill="#fff" stroke="#5f8bd0"/><rect x="1" y="1" width="8" height="2" fill="#88afe8"/><path d="M2 4.5 H8.2" stroke="#a9a9a9" stroke-width="1"/><path d="M2.5 4.5 V5.8 M4.6 4.5 V5.8 M6.7 4.5 V5.8" stroke="#b4b4b4" stroke-width="0.9"/></svg></div>
<div class="t" style="top:287px;letter-spacing:-0.111px;transform:scaleX(0.9533);transform-origin:0 0;left:608px;">Marka Serisi</div>
<div class="f" style="left:728px;top:286px;width:412px;"></div>
<div class="t" style="top:287px;letter-spacing:-0.171px;transform:scaleX(0.9084);transform-origin:0 0;left:733px;">BOSCH</div>
<div class="bd" style="left:1105px;top:288px"><i style="left:2px"></i><i style="left:6px"></i><i style="left:10px"></i></div>
<div class="bc" style="left:1122px;top:288px"><svg width="10" height="8" viewBox="0 0 10 8"><rect x="0.5" y="0.5" width="9" height="7" rx="1.3" fill="#fff" stroke="#5f8bd0"/><rect x="1" y="1" width="8" height="2" fill="#88afe8"/><path d="M2 4.5 H8.2" stroke="#a9a9a9" stroke-width="1"/><path d="M2.5 4.5 V5.8 M4.6 4.5 V5.8 M6.7 4.5 V5.8" stroke="#b4b4b4" stroke-width="0.9"/></svg></div>
<div class="t" style="top:311px;letter-spacing:-0.114px;transform:scaleX(0.9802);transform-origin:0 0;left:608px;">Menşei (Ülke)</div>
<div class="f" style="left:728px;top:310px;width:412px;"></div>
<div class="bd" style="left:1105px;top:312px"><i style="left:2px"></i><i style="left:6px"></i><i style="left:10px"></i></div>
<div class="bw" style="left:1122px;top:312px"><svg width="10" height="8" viewBox="0 0 10 8"><rect x="0.5" y="0.5" width="9" height="7" rx="1.3" fill="#fff" stroke="#5f8bd0"/><rect x="1" y="1" width="8" height="2" fill="#88afe8"/><path d="M2 4.5 H8.2" stroke="#a9a9a9" stroke-width="1"/><path d="M2.5 4.5 V5.8 M4.6 4.5 V5.8 M6.7 4.5 V5.8" stroke="#b4b4b4" stroke-width="0.9"/></svg></div>
<div class="t" style="top:335px;letter-spacing:-0.081px;left:608px;">Üretici Kodu</div>
<div class="f" style="left:728px;top:334px;width:412px;"></div>
<div class="t" style="top:360px;letter-spacing:-0.118px;transform:scaleX(0.9921);transform-origin:0 0;left:608px;">İzleme Yöntemi</div>
<div class="cb" style="left:728px;top:358px;width:200px"><div class="ca"></div><svg class="chev" width="10" height="6" viewBox="0 0 10 6"><path d="M1 0.8 L4.8 4.6 L8.6 0.8" fill="none" stroke="#333" stroke-width="1.15"/></svg></div>
<div class="t" style="top:360px;letter-spacing:-0.120px;transform:scaleX(0.9518);transform-origin:0 0;left:732px;">Stok</div>
<div class="t" style="top:386px;letter-spacing:-0.004px;left:608px;">Maliyet Yöntemi</div>
<div class="cb" style="left:728px;top:384px;width:200px"><div class="ca"></div><svg class="chev" width="10" height="6" viewBox="0 0 10 6"><path d="M1 0.8 L4.8 4.6 L8.6 0.8" fill="none" stroke="#333" stroke-width="1.15"/></svg></div>
<div class="t" style="top:386px;letter-spacing:-0.112px;transform:scaleX(0.9562);transform-origin:0 0;left:732px;">Varsayılan</div>
<div class="t" style="top:412px;letter-spacing:-0.102px;transform:scaleX(0.9871);transform-origin:0 0;left:608px;">Fiziksel Maliyet</div>
<div class="cb" style="left:728px;top:410px;width:200px"><div class="ca"></div><svg class="chev" width="10" height="6" viewBox="0 0 10 6"><path d="M1 0.8 L4.8 4.6 L8.6 0.8" fill="none" stroke="#333" stroke-width="1.15"/></svg></div>
<div class="t" style="top:412px;letter-spacing:-0.115px;transform:scaleX(0.9823);transform-origin:0 0;left:732px;">Hayır</div>
<div class="t" style="top:438px;letter-spacing:-0.103px;left:608px;">Maliyet Hesaplama</div>
<div class="cb" style="left:728px;top:436px;width:200px"><div class="ca"></div><svg class="chev" width="10" height="6" viewBox="0 0 10 6"><path d="M1 0.8 L4.8 4.6 L8.6 0.8" fill="none" stroke="#333" stroke-width="1.15"/></svg></div>
<div class="t" style="top:438px;letter-spacing:-0.106px;transform:scaleX(0.9831);transform-origin:0 0;left:732px;">Yalın</div>
<div class="t" style="top:464px;letter-spacing:-0.108px;transform:scaleX(0.9609);transform-origin:0 0;left:608px;">Sarf İçin Seçim</div>
<div class="cb" style="left:728px;top:462px;width:200px"><div class="ca"></div><svg class="chev" width="10" height="6" viewBox="0 0 10 6"><path d="M1 0.8 L4.8 4.6 L8.6 0.8" fill="none" stroke="#333" stroke-width="1.15"/></svg></div>
<div class="t" style="top:464px;letter-spacing:-0.126px;transform:scaleX(0.9862);transform-origin:0 0;left:732px;">Sistemden Oku</div>
<div class="t" style="top:490px;letter-spacing:-0.108px;transform:scaleX(0.9689);transform-origin:0 0;left:608px;">Stok Yeri İzleme</div>
<div class="cb" style="left:728px;top:488px;width:200px"><div class="ca"></div><svg class="chev" width="10" height="6" viewBox="0 0 10 6"><path d="M1 0.8 L4.8 4.6 L8.6 0.8" fill="none" stroke="#333" stroke-width="1.15"/></svg></div>
<div class="t" style="top:490px;letter-spacing:-0.118px;transform:scaleX(0.9277);transform-origin:0 0;left:732px;">Serbest</div>
<div class="a" style="left:7px;top:431px;width:594px;height:32px;border:3px solid #e6363d;border-radius:5px"></div>
<div class="t" style="top:514px;letter-spacing:-0.107px;transform:scaleX(0.9323);transform-origin:0 0;left:12.5px;font-weight:bold;">Fiyatlar</div>
<div class="a" style="left:56px;top:523px;width:1083px;height:1px;background:#a0a0a0"></div>
<div class="t" style="top:535px;letter-spacing:-0.104px;transform:scaleX(0.9334);transform-origin:0 0;left:12.5px;">Varsayılan Satış Fiyatı</div>
<div class="f" style="left:137px;top:534px;width:120px;"></div>
<div class="t" style="top:535px;letter-spacing:-0.134px;transform:scaleX(0.9166);transform-origin:0 0;left:238.70px;">10</div>
<div class="t" style="top:559px;letter-spacing:-0.108px;transform:scaleX(0.9628);transform-origin:0 0;left:12.5px;">Satış Fiyatlama Dövizi</div>
<div class="f" style="left:137px;top:558px;width:459px;"></div>
<div class="t" style="top:559px;letter-spacing:-0.113px;transform:scaleX(0.9732);transform-origin:0 0;left:142px;">EUR [Avrupa Para Birimi]</div>
<div class="bd" style="left:561px;top:560px"><i style="left:2px"></i><i style="left:6px"></i><i style="left:10px"></i></div>
<div class="bc" style="left:578px;top:560px"><svg width="10" height="8" viewBox="0 0 10 8"><rect x="0.5" y="0.5" width="9" height="7" rx="1.3" fill="#fff" stroke="#5f8bd0"/><rect x="1" y="1" width="8" height="2" fill="#88afe8"/><path d="M2 4.5 H8.2" stroke="#a9a9a9" stroke-width="1"/><path d="M2.5 4.5 V5.8 M4.6 4.5 V5.8 M6.7 4.5 V5.8" stroke="#b4b4b4" stroke-width="0.9"/></svg></div>
<div class="t" style="top:535px;letter-spacing:-0.101px;transform:scaleX(0.9575);transform-origin:0 0;left:608px;">Varsayılan Alış Fiyatı</div>
<div class="f" style="left:728px;top:534px;width:120px;border-color:#3c3c3c;"></div>
<div class="t" style="top:535px;letter-spacing:-0.120px;transform:scaleX(0.9174);transform-origin:0 0;left:815.00px;">94,29</div>
<div class="t" style="top:559px;letter-spacing:-0.106px;transform:scaleX(0.9814);transform-origin:0 0;left:608px;">Alış Fiyatlama Dövizi</div>
<div class="f" style="left:728px;top:558px;width:412px;"></div>
<div class="bd" style="left:1105px;top:560px"><i style="left:2px"></i><i style="left:6px"></i><i style="left:10px"></i></div>
<div class="bw" style="left:1122px;top:560px"><svg width="10" height="8" viewBox="0 0 10 8"><rect x="0.5" y="0.5" width="9" height="7" rx="1.3" fill="#fff" stroke="#5f8bd0"/><rect x="1" y="1" width="8" height="2" fill="#88afe8"/><path d="M2 4.5 H8.2" stroke="#a9a9a9" stroke-width="1"/><path d="M2.5 4.5 V5.8 M4.6 4.5 V5.8 M6.7 4.5 V5.8" stroke="#b4b4b4" stroke-width="0.9"/></svg></div>
<div class="a" style="left:138px;top:583px;width:198px;height:23px;background:#e1e1e1;border:1px solid #adadad"></div>
<div class="t" style="top:585px;letter-spacing:-0.101px;transform:scaleX(0.9749);transform-origin:0 0;left:186.3px;">Detaylı Fiyatlama ...</div>
<div class="a" style="left:12px;top:610px;width:1128px;height:26px;border:1px solid #b3cbe4;border-bottom:none;border-radius:3px 3px 0 0;background:linear-gradient(#dce5f0,#eef3f8 55%,#ffffff 90%)"></div>
<div class="a" style="left:12px;top:622px;width:1128px;height:15px;background:linear-gradient(rgba(255,255,255,0),#fff)"></div>
<svg class="a" style="left:21px;top:617px" width="5" height="9"><path d="M0 0L4.5 4.5L0 9Z" fill="#2a7ad0"/></svg>
<div class="t" style="top:611px;letter-spacing:-0.059px;left:33.2px;font-weight:bold;color:#166cd4;">Stok Durumu</div>
</body></html>
